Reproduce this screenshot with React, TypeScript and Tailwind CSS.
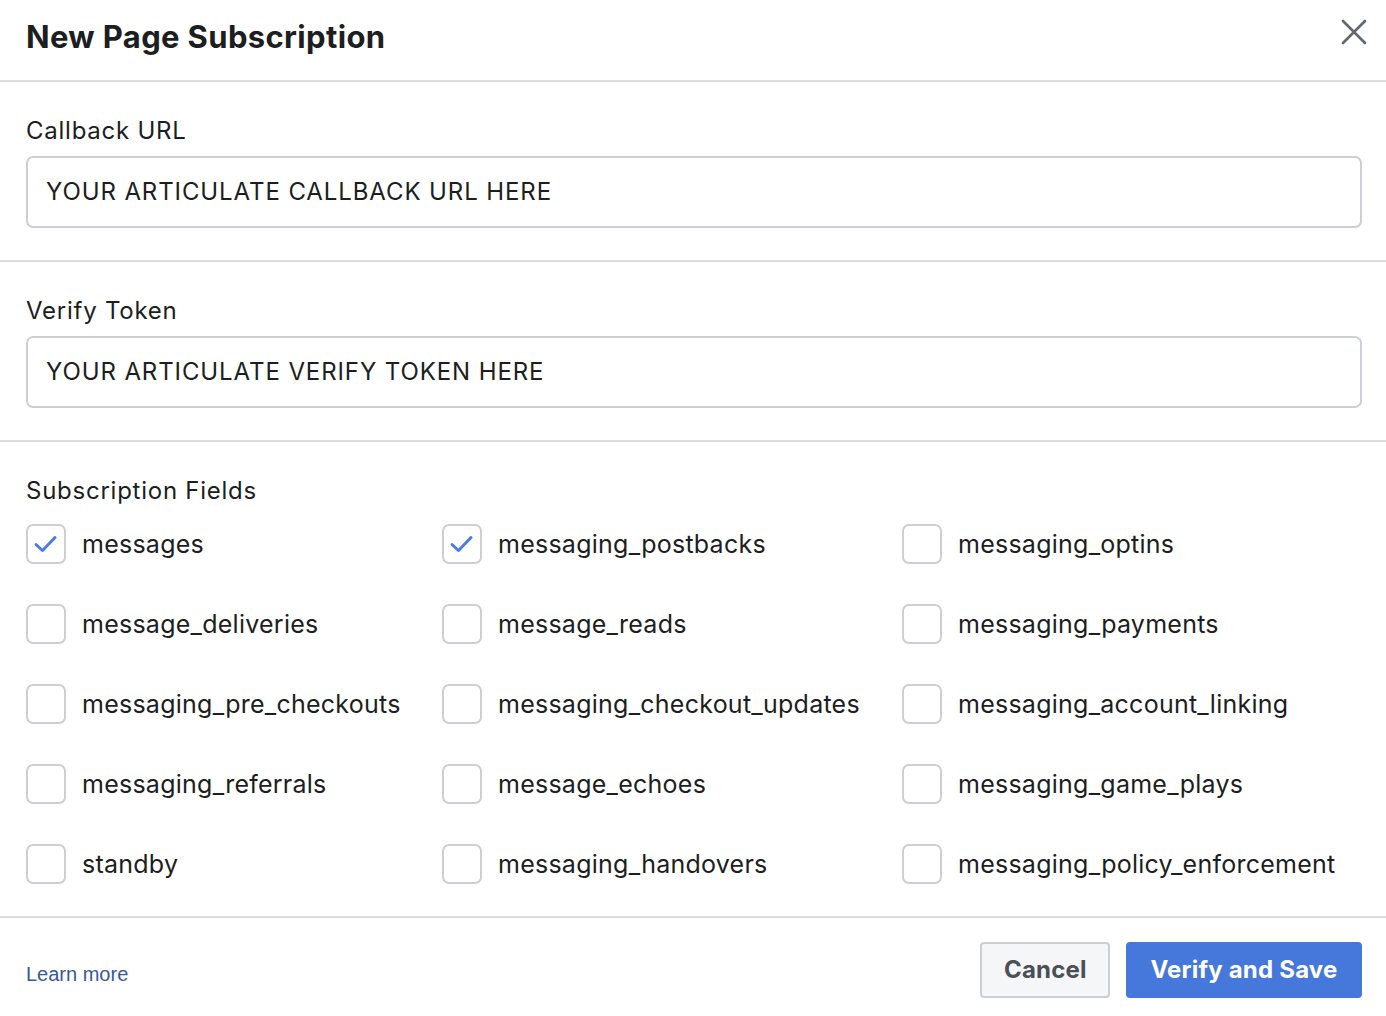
import React from "react";

const rows: [string, boolean][][] = [
  [["messages", true], ["messaging_postbacks", true], ["messaging_optins", false]],
  [["message_deliveries", false], ["message_reads", false], ["messaging_payments", false]],
  [["messaging_pre_checkouts", false], ["messaging_checkout_updates", false], ["messaging_account_linking", false]],
  [["messaging_referrals", false], ["message_echoes", false], ["messaging_game_plays", false]],
  [["standby", false], ["messaging_handovers", false], ["messaging_policy_enforcement", false]],
];

function Box({ checked }: { checked: boolean }) {
  return (
    <div className="w-[40px] h-[40px] rounded-[7px] border-2 border-[#ccd0d5] bg-white flex items-center justify-center shrink-0">
      {checked && (
        <svg width="26" height="20" viewBox="0 0 26 20" fill="none">
          <path d="M3 10.5 L9.5 16.5 L22 3.5" stroke="#4a7de0" strokeWidth="3" strokeLinecap="round" strokeLinejoin="round" />
        </svg>
      )}
    </div>
  );
}

function Item({ label, checked, w }: { label: string; checked: boolean; w: string }) {
  return (
    <div className={`flex items-center gap-[16px] ${w}`}>
      <Box checked={checked} />
      <span className="text-[25px] text-[#1c1e21] leading-none tracking-[0.25px]">{label}</span>
    </div>
  );
}

export default function App() {
  const widths = ["w-[416px]", "w-[460px]", "flex-1"];
  return (
    <div className="w-[1386px] h-[1016px] bg-white text-[#1c1e21]" style={{ fontFamily: "Inter, 'Noto Sans', sans-serif" }}>
      <div className="h-[82px] border-b-2 border-[#dadde1] flex items-start justify-between pl-[26px] pr-[18px]">
        <h1 className="text-[31px] font-bold text-[#1c1e21] mt-[17px] leading-[40px] tracking-[0.35px]">New Page Subscription</h1>
        <button className="mt-[18px] w-[28px] h-[28px] flex items-center justify-center">
          <svg width="26" height="26" viewBox="0 0 26 26">
            <path d="M2 2 L24 24 M24 2 L2 24" stroke="#606770" strokeWidth="2.6" strokeLinecap="round" />
          </svg>
        </button>
      </div>

      <div className="border-b-2 border-[#dadde1] pl-[26px] pr-[24px] pt-[34px] pb-[32px] h-[180px]">
        <div className="text-[24px] leading-[30px] mb-[10px] tracking-[0.75px]">Callback URL</div>
        <div className="h-[72px] border-2 border-[#ccd0d5] rounded-[7px] flex items-center px-[18px] text-[24px] tracking-[0.9px]">
          YOUR ARTICULATE CALLBACK URL HERE
        </div>
      </div>

      <div className="border-b-2 border-[#dadde1] pl-[26px] pr-[24px] pt-[34px] pb-[32px] h-[180px]">
        <div className="text-[24px] leading-[30px] mb-[10px] tracking-[0.75px]">Verify Token</div>
        <div className="h-[72px] border-2 border-[#ccd0d5] rounded-[7px] flex items-center px-[18px] text-[24px] tracking-[0.9px]">
          YOUR ARTICULATE VERIFY TOKEN HERE
        </div>
      </div>

      <div className="border-b-2 border-[#dadde1] px-[26px] pt-[34px] h-[476px]">
        <div className="text-[24px] leading-[30px] mb-[18px] tracking-[0.75px]">Subscription Fields</div>
        <div className="flex flex-col gap-[40px]">
          {rows.map((r, i) => (
            <div key={i} className="flex">
              {r.map(([l, c], j) => (
                <Item key={l} label={l} checked={c} w={widths[j]} />
              ))}
            </div>
          ))}
        </div>
      </div>

      <div className="flex items-center justify-between pr-[24px] pl-[26px] pt-[24px]">
        <a className="text-[20px] text-[#385898] mt-[8px]" style={{ fontFamily: "'Liberation Sans', Arial, sans-serif" }}>Learn more</a>
        <div className="flex gap-[16px]">
          <button className="h-[56px] px-[22px] w-[130px] bg-[#f5f6f7] border-2 border-[#ccd0d5] rounded-[4px] text-[24px] font-bold text-[#4b4f56] tracking-[0.2px]">Cancel</button>
          <button className="h-[56px] w-[236px] bg-[#4678dc] rounded-[4px] text-[24px] font-bold text-white tracking-[0.2px]">Verify and Save</button>
        </div>
      </div>
    </div>
  );
}
